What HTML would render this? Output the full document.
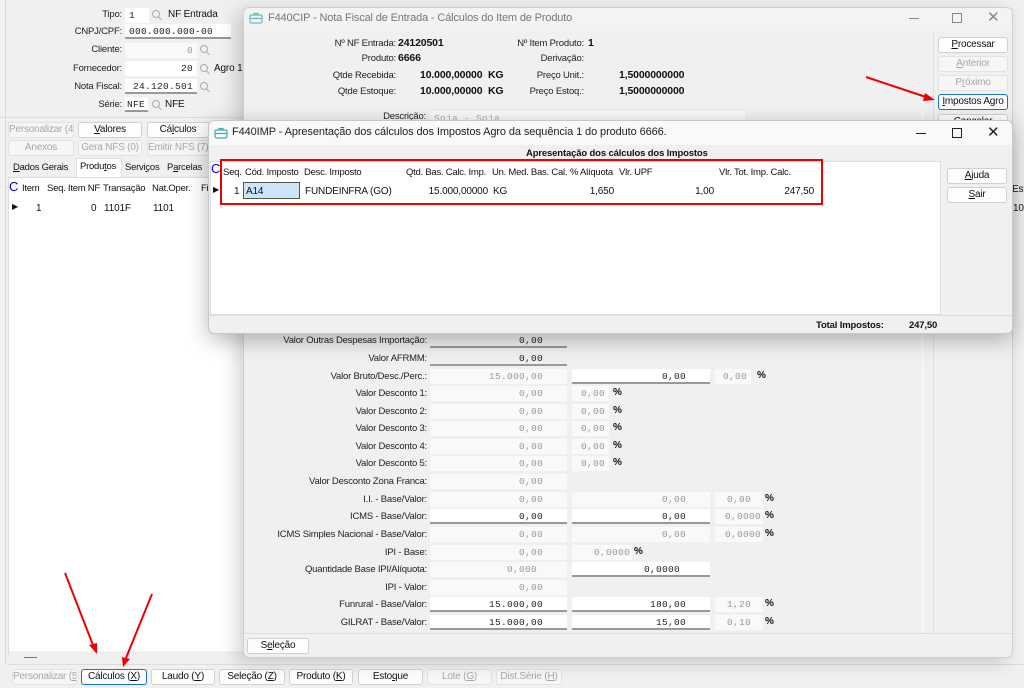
<!DOCTYPE html>
<html><head><meta charset="utf-8">
<style>
*{box-sizing:border-box;margin:0;padding:0}
body{width:1024px;height:688px;overflow:hidden;background:#f0f0f0;font-family:"Liberation Sans",sans-serif;font-size:10px;letter-spacing:-0.15px;color:#111;position:relative}
.a{position:absolute;white-space:nowrap}
.r{text-align:right}
.inp{position:absolute;background:#fff;height:15px;font-family:"Liberation Mono",monospace;font-size:9.5px;letter-spacing:0.3px;line-height:15px;padding:0 4px;color:#222;white-space:nowrap}
.ro{background:#f9f9f9;color:#999}
.ul{border-bottom:2px solid #999}
.btn{position:absolute;height:16px;background:#fdfdfd;border:1px solid #d0d0d0;border-radius:3px;text-align:center;line-height:14px;font-size:10px;color:#111;white-space:nowrap;overflow:hidden;letter-spacing:-0.2px}
.dis{color:#a8a8a8;background:#f6f6f6;border-color:#e2e2e2}
.mag{position:absolute;width:8px;height:8px;border:1.2px solid #aaa;border-radius:50%}
.mag:after{content:"";position:absolute;width:4px;height:1.2px;background:#aaa;left:5px;top:7px;transform:rotate(45deg)}
.b{font-weight:bold}
.lbl{position:absolute;text-align:right;white-space:nowrap;font-size:9.5px;color:#222;letter-spacing:-0.2px}
.g{font-size:9.5px;letter-spacing:-0.25px}
</style></head><body>

<div class="a" style="left:5px;top:0;width:1px;height:665px;background:#d8d8d8"></div>
<div class="lbl" style="left:40px;top:9px;width:82px">Tipo:</div>
<div class="inp" style="left:125px;top:8px;width:24px">1</div><div class="mag" style="left:152px;top:10px"></div>
<div class="a" style="left:168px;top:9px">NF Entrada</div>
<div class="lbl" style="left:40px;top:26px;width:82px">CNPJ/CPF:</div>
<div class="inp ul" style="left:125px;top:24px;width:106px">000.000.000-00</div>
<div class="lbl" style="left:40px;top:44px;width:82px">Cliente:</div>
<div class="inp ro r" style="left:125px;top:43px;width:72px">0</div><div class="mag" style="left:200px;top:45px"></div>
<div class="lbl" style="left:40px;top:63px;width:82px">Fornecedor:</div>
<div class="inp r" style="left:125px;top:61px;width:72px">20</div><div class="mag" style="left:200px;top:64px"></div>
<div class="a" style="left:214px;top:63px">Agro 1</div>
<div class="lbl" style="left:40px;top:81px;width:82px">Nota Fiscal:</div>
<div class="inp ul r" style="left:125px;top:79px;width:72px">24.120.501</div><div class="mag" style="left:200px;top:82px"></div>
<div class="lbl" style="left:40px;top:99px;width:82px">Série:</div>
<div class="inp ul" style="left:125px;top:97px;width:23px;padding:0 2px">NFE</div><div class="mag" style="left:152px;top:100px"></div>
<div class="a" style="left:165px;top:99px">NFE</div>

<div class="a" style="left:0;top:117px;width:243px;height:1px;background:#ddd"></div>
<div class="btn dis" style="left:8px;top:122px;width:66px">Personalizar (4)</div>
<div class="btn" style="left:78px;top:122px;width:64px"><u>V</u>alores</div>
<div class="btn" style="left:147px;top:122px;width:62px">Cá<u>l</u>culos</div>
<div class="btn dis" style="left:8px;top:140px;width:66px">Anexos</div>
<div class="btn dis" style="left:78px;top:140px;width:64px">Gera NFS (0)</div>
<div class="btn dis" style="left:147px;top:140px;width:62px">Emitir NFS (7)</div>
<div class="a g" style="left:13px;top:162px"><u>D</u>ados Gerais</div>
<div class="a" style="left:76px;top:158px;width:46px;height:19px;background:#fff;border:1px solid #ddd;border-bottom:none"></div>
<div class="a g" style="left:80px;top:161px">Produ<u>t</u>os</div>
<div class="a g" style="left:125px;top:162px">Servi<u>ç</u>os</div>
<div class="a g" style="left:167px;top:162px">P<u>a</u>rcelas</div>
<div class="a" style="left:209px;top:161px;color:#00c;font-size:13px">C</div>
<div class="a" style="left:8px;top:177px;width:236px;height:478px;background:#fff;border:1px solid #ddd"></div>
<div class="a" style="left:9px;top:179px;color:#0000dd;font-size:13px">C</div>
<div class="a g" style="left:22px;top:183px">Item</div>
<div class="a g" style="left:47px;top:183px">Seq. Item NF</div>
<div class="a g" style="left:103px;top:183px">Transação</div>
<div class="a g" style="left:152px;top:183px">Nat.Oper.</div>
<div class="a g" style="left:201px;top:183px">Fi</div>
<div class="a" style="left:12px;top:202px;font-size:8px">&#9654;</div>
<div class="a" style="left:36px;top:203px">1</div>
<div class="a" style="left:91px;top:203px">0</div>
<div class="a" style="left:104px;top:203px">1101F</div>
<div class="a" style="left:153px;top:203px">1101</div>
<div class="a" style="left:9px;top:651px;width:235px;height:12px;background:#f0f0f0"></div>
<div class="a" style="left:24px;top:657px;width:13px;height:1px;background:#777"></div>

<div class="a" style="left:8px;top:664px;width:1016px;height:1px;background:#ddd"></div>
<div class="btn dis" style="left:12px;top:669px;width:65px">Personalizar (<u>5</u>)</div>
<div class="btn" style="left:81px;top:669px;width:66px;border-color:#1a6fd0">Cálculos (<u>X</u>)</div>
<div class="btn" style="left:151px;top:669px;width:64px">Laudo (<u>Y</u>)</div>
<div class="btn" style="left:219px;top:669px;width:66px">Seleção (<u>Z</u>)</div>
<div class="btn" style="left:289px;top:669px;width:64px">Produto (<u>K</u>)</div>
<div class="btn" style="left:358px;top:669px;width:65px">Esto<u>q</u>ue</div>
<div class="btn dis" style="left:427px;top:669px;width:65px">Lote (<u>G</u>)</div>
<div class="btn dis" style="left:496px;top:669px;width:66px">Dist.Série (<u>H</u>)</div>

<div class="a" style="left:1012px;top:184px">Esto</div>
<div class="a" style="left:1013px;top:203px">10</div>

<!-- F440CIP -->
<div class="a" style="left:243px;top:7px;width:770px;height:651px;background:#f0f0f0;border:1px solid #cfcfcf;border-radius:6px;box-shadow:-6px 4px 18px rgba(0,0,0,.18)"></div>
<div class="a" style="left:244px;top:8px;width:768px;height:23px;background:#f3f3f3;border-radius:6px 6px 0 0"></div>
<svg class="a" style="left:249px;top:12px" width="14" height="12" viewBox="0 0 14 12"><rect x="1" y="3" width="12" height="8" rx="1.5" fill="none" stroke="#6bb" stroke-width="1.2"/><path d="M5 3V1.5h4V3M1 6.5h12" stroke="#6bb" fill="none" stroke-width="1.2"/></svg>
<div class="a" style="left:268px;top:12px;font-size:11px;color:#777">F440CIP - Nota Fiscal de Entrada - Cálculos do Item de Produto</div>
<div class="a" style="left:909px;top:18px;width:10px;height:1px;background:#888"></div>
<div class="a" style="left:952px;top:13px;width:10px;height:10px;border:1px solid #888"></div>
<div class="a" style="left:987px;top:8px;font-size:15px;color:#888">✕</div>

<div class="lbl" style="left:300px;top:38px;width:96px">Nº NF Entrada:</div><div class="a b" style="left:398px;top:37px;font-size:10.5px">24120501</div>
<div class="lbl" style="left:300px;top:53px;width:96px">Produto:</div><div class="a b" style="left:398px;top:52px;font-size:10.5px">6666</div>
<div class="lbl" style="left:300px;top:70px;width:96px">Qtde Recebida:</div><div class="a b" style="left:420px;top:69px;font-size:10.5px">10.000,00000 &nbsp;KG</div>
<div class="lbl" style="left:300px;top:86px;width:96px">Qtde Estoque:</div><div class="a b" style="left:420px;top:85px;font-size:10.5px">10.000,00000 &nbsp;KG</div>
<div class="lbl" style="left:480px;top:38px;width:104px">Nº Item Produto:</div><div class="a b" style="left:588px;top:37px;font-size:10.5px">1</div>
<div class="lbl" style="left:480px;top:53px;width:104px">Derivação:</div>
<div class="lbl" style="left:480px;top:70px;width:104px">Preço Unit.:</div><div class="a b" style="left:619px;top:69px;font-size:10.5px">1,5000000000</div>
<div class="lbl" style="left:480px;top:86px;width:104px">Preço Estoq.:</div><div class="a b" style="left:619px;top:85px;font-size:10.5px">1,5000000000</div>
<div class="lbl" style="left:330px;top:111px;width:96px">Descrição:</div>
<div class="inp ro" style="left:430px;top:111px;width:315px;color:#aaa">Soja - Soja</div>

<div class="a" style="left:933px;top:32px;width:1px;height:603px;background:#ddd"></div>
<div class="a" style="left:922px;top:110px;width:1px;height:525px;background:#fafafa"></div>
<div class="btn" style="left:938px;top:37px;width:70px"><u>P</u>rocessar</div>
<div class="btn dis" style="left:938px;top:56px;width:70px"><u>A</u>nterior</div>
<div class="btn dis" style="left:938px;top:75px;width:70px">P<u>r</u>óximo</div>
<div class="btn" style="left:938px;top:94px;width:70px;border-color:#1a6fd0"><u>I</u>mpostos Agro</div>
<div class="btn" style="left:938px;top:114px;width:70px">Cancelar</div>

<div class="lbl" style="left:250px;top:335px;width:177px">Valor Outras Despesas Importação:</div>
<div class="inp ul r" style="left:430px;top:333px;width:137px;background:#f0f0f0;padding-right:24px">0,00</div>
<div class="lbl" style="left:250px;top:353px;width:177px">Valor AFRMM:</div>
<div class="inp ul r" style="left:430px;top:351px;width:137px;background:#f0f0f0;padding-right:24px">0,00</div>
<div class="lbl" style="left:250px;top:371px;width:177px">Valor Bruto/Desc./Perc.:</div>
<div class="inp ro r" style="left:430px;top:369px;width:137px;padding-right:24px">15.000,00</div>
<div class="inp ul r" style="left:572px;top:369px;width:138px;padding-right:24px">0,00</div>
<div class="inp ro r" style="left:715px;top:369px;width:36px">0,00</div><div class="a b" style="left:757px;top:370px">%</div>

<div class="lbl" style="left:250px;top:388px;width:177px">Valor Desconto 1:</div>
<div class="inp ro r" style="left:430px;top:386px;width:137px;padding-right:24px">0,00</div>
<div class="inp ro r" style="left:572px;top:386px;width:37px">0,00</div><div class="a b" style="left:613px;top:387px">%</div>
<div class="lbl" style="left:250px;top:406px;width:177px">Valor Desconto 2:</div>
<div class="inp ro r" style="left:430px;top:404px;width:137px;padding-right:24px">0,00</div>
<div class="inp ro r" style="left:572px;top:404px;width:37px">0,00</div><div class="a b" style="left:613px;top:405px">%</div>
<div class="lbl" style="left:250px;top:423px;width:177px">Valor Desconto 3:</div>
<div class="inp ro r" style="left:430px;top:421px;width:137px;padding-right:24px">0,00</div>
<div class="inp ro r" style="left:572px;top:421px;width:37px">0,00</div><div class="a b" style="left:613px;top:422px">%</div>
<div class="lbl" style="left:250px;top:441px;width:177px">Valor Desconto 4:</div>
<div class="inp ro r" style="left:430px;top:439px;width:137px;padding-right:24px">0,00</div>
<div class="inp ro r" style="left:572px;top:439px;width:37px">0,00</div><div class="a b" style="left:613px;top:440px">%</div>
<div class="lbl" style="left:250px;top:458px;width:177px">Valor Desconto 5:</div>
<div class="inp ro r" style="left:430px;top:456px;width:137px;padding-right:24px">0,00</div>
<div class="inp ro r" style="left:572px;top:456px;width:37px">0,00</div><div class="a b" style="left:613px;top:457px">%</div>
<div class="lbl" style="left:250px;top:476px;width:177px">Valor Desconto Zona Franca:</div>
<div class="inp ro r" style="left:430px;top:474px;width:137px;padding-right:24px">0,00</div>

<div class="lbl" style="left:250px;top:494px;width:177px">I.I. - Base/Valor:</div>
<div class="inp ro r" style="left:430px;top:492px;width:137px;padding-right:24px">0,00</div>
<div class="inp ro r" style="left:572px;top:492px;width:138px;padding-right:24px">0,00</div>
<div class="inp ro r" style="left:715px;top:492px;width:48px;padding-right:12px">0,00</div><div class="a b" style="left:765px;top:493px">%</div>
<div class="lbl" style="left:250px;top:511px;width:177px">ICMS - Base/Valor:</div>
<div class="inp ul r" style="left:430px;top:509px;width:137px;padding-right:24px">0,00</div>
<div class="inp ul r" style="left:572px;top:509px;width:138px;padding-right:24px">0,00</div>
<div class="inp ro r" style="left:715px;top:509px;width:48px;padding-right:2px">0,0000</div><div class="a b" style="left:765px;top:510px">%</div>
<div class="lbl" style="left:250px;top:529px;width:177px">ICMS Simples Nacional - Base/Valor:</div>
<div class="inp ro r" style="left:430px;top:527px;width:137px;padding-right:24px">0,00</div>
<div class="inp ro r" style="left:572px;top:527px;width:138px;padding-right:24px">0,00</div>
<div class="inp ro r" style="left:715px;top:527px;width:48px;padding-right:2px">0,0000</div><div class="a b" style="left:765px;top:528px">%</div>
<div class="lbl" style="left:250px;top:547px;width:177px">IPI - Base:</div>
<div class="inp ro r" style="left:430px;top:545px;width:137px;padding-right:24px">0,00</div>
<div class="inp ro r" style="left:572px;top:545px;width:60px;padding-right:2px">0,0000</div><div class="a b" style="left:634px;top:546px">%</div>
<div class="lbl" style="left:250px;top:564px;width:177px">Quantidade Base IPI/Alíquota:</div>
<div class="inp ro r" style="left:430px;top:562px;width:137px;padding-right:30px">0,000</div>
<div class="inp ul r" style="left:572px;top:562px;width:138px;padding-right:30px">0,0000</div>
<div class="lbl" style="left:250px;top:582px;width:177px">IPI - Valor:</div>
<div class="inp ro r" style="left:430px;top:580px;width:137px;padding-right:24px">0,00</div>
<div class="lbl" style="left:250px;top:599px;width:177px">Funrural - Base/Valor:</div>
<div class="inp ul r" style="left:430px;top:597px;width:137px;padding-right:24px">15.000,00</div>
<div class="inp ul r" style="left:572px;top:597px;width:138px;padding-right:24px">180,00</div>
<div class="inp ro r" style="left:715px;top:597px;width:48px;padding-right:12px">1,20</div><div class="a b" style="left:765px;top:598px">%</div>
<div class="lbl" style="left:250px;top:617px;width:177px">GILRAT - Base/Valor:</div>
<div class="inp ul r" style="left:430px;top:615px;width:137px;padding-right:24px">15.000,00</div>
<div class="inp ul r" style="left:572px;top:615px;width:138px;padding-right:24px">15,00</div>
<div class="inp ro r" style="left:715px;top:615px;width:48px;padding-right:12px">0,10</div><div class="a b" style="left:765px;top:616px">%</div>
<div class="a" style="left:244px;top:633px;width:768px;height:24px;background:#f0f0f0;border-top:1px solid #ddd;border-radius:0 0 6px 6px"></div>
<div class="btn" style="left:247px;top:638px;width:62px">S<u>e</u>leção</div>

<!-- F440IMP -->
<div class="a" style="left:208px;top:120px;width:805px;height:214px;background:#f0f0f0;border:1px solid #c8c8c8;border-radius:6px;box-shadow:0 6px 22px rgba(0,0,0,.28)"></div>
<div class="a" style="left:209px;top:121px;width:803px;height:24px;background:#f9f9f9;border-radius:6px 6px 0 0"></div>
<svg class="a" style="left:214px;top:127px" width="14" height="12" viewBox="0 0 14 12"><rect x="1" y="3" width="12" height="8" rx="1.5" fill="none" stroke="#4aa" stroke-width="1.2"/><path d="M5 3V1.5h4V3M1 6.5h12" stroke="#4aa" fill="none" stroke-width="1.2"/></svg>
<div class="a" style="left:232px;top:126px;font-size:11px;color:#222;letter-spacing:-0.1px">F440IMP - Apresentação dos cálculos dos Impostos Agro da sequência 1 do produto 6666.</div>
<div class="a" style="left:916px;top:133px;width:10px;height:1px;background:#222"></div>
<div class="a" style="left:952px;top:128px;width:10px;height:10px;border:1px solid #222"></div>
<div class="a" style="left:987px;top:123px;font-size:15px;color:#222">✕</div>
<div class="a b" style="left:526px;top:148px;font-size:9.5px">Apresentação dos cálculos dos Impostos</div>
<div class="a" style="left:210px;top:161px;width:731px;height:154px;background:#fff;border:1px solid #ddd"></div>
<div class="a" style="left:211px;top:161px;color:#0000dd;font-size:13px">C</div>
<div class="a g" style="left:223px;top:167px">Seq.</div>
<div class="a g" style="left:245px;top:167px">Cód. Imposto</div>
<div class="a g" style="left:304px;top:167px">Desc. Imposto</div>
<div class="a g" style="left:406px;top:167px">Qtd. Bas. Calc. Imp.</div>
<div class="a g" style="left:492px;top:167px">Un. Med. Bas. Cal.</div>
<div class="a g" style="left:570px;top:167px">% Alíquota</div>
<div class="a g" style="left:619px;top:167px">Vlr. UPF</div>
<div class="a g" style="left:719px;top:167px">Vlr. Tot. Imp. Calc.</div>
<div class="a" style="left:213px;top:185px;font-size:8px">&#9654;</div>
<div class="a" style="left:234px;top:186px">1</div>
<div class="a" style="left:243px;top:182px;width:57px;height:17px;background:#cce4f7;border:1px solid #555"></div>
<div class="a" style="left:246px;top:186px">A14</div>
<div class="a" style="left:305px;top:186px">FUNDEINFRA (GO)</div>
<div class="a r" style="left:404px;top:186px;width:84px">15.000,00000</div>
<div class="a" style="left:493px;top:186px">KG</div>
<div class="a r" style="left:568px;top:186px;width:46px">1,650</div>
<div class="a r" style="left:616px;top:186px;width:98px">1,00</div>
<div class="a r" style="left:716px;top:186px;width:98px">247,50</div>
<div class="a" style="left:220px;top:159px;width:603px;height:46px;border:2.5px solid #e00"></div>
<div class="btn" style="left:947px;top:168px;width:60px"><u>A</u>juda</div>
<div class="btn" style="left:947px;top:187px;width:60px"><u>S</u>air</div>
<div class="a" style="left:209px;top:315px;width:803px;height:1px;background:#ddd"></div>
<div class="a b" style="left:816px;top:320px;font-size:9.5px">Total Impostos:</div>
<div class="a b" style="left:909px;top:320px;font-size:9.5px">247,50</div>

<svg class="a" style="left:0;top:0" width="1024" height="688">
<g stroke="#e00" stroke-width="2" fill="#e00">
<line x1="65" y1="573" x2="93" y2="645"/><polygon points="97,654 89,645 97,643" stroke="none"/>
<line x1="152" y1="594" x2="126" y2="658"/><polygon points="123,667 122,657 130,659" stroke="none"/>
<line x1="866" y1="77" x2="926" y2="97"/><polygon points="935,100 925,93 923,101" stroke="none"/>
</g></svg>
</body></html>
